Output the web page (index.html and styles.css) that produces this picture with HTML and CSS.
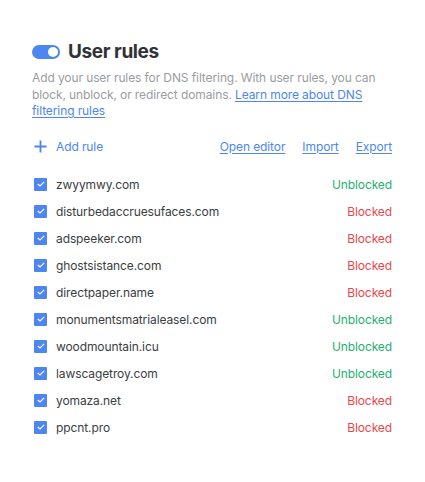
FILE: index.html
```html
<!DOCTYPE html>
<html>
<head>
<meta charset="utf-8">
<link rel="stylesheet" href="styles.css">
</head>
<body>
<div class="card">
  <div class="header">
    <span class="toggle"><span class="knob"></span></span>
    <h1 class="title">User rules</h1>
  </div>
  <p class="desc">Add your user rules for DNS filtering. With user rules, you can block, unblock, or redirect domains. <a class="link" href="#">Learn more about DNS filtering rules</a></p>
  <div class="actions">
    <a class="add" href="#"><svg class="plus" width="13" height="13" viewBox="0 0 13 13"><path d="M6.5 0.5v12M0.5 6.5h12" stroke="#4d86f0" stroke-width="1.8" fill="none"/></svg>Add rule</a>
    <div class="links">
      <a class="link" href="#">Open editor</a>
      <a class="link" href="#">Import</a>
      <a class="link" href="#">Export</a>
    </div>
  </div>
  <ul class="rules">
    <li class="rule"><span class="check"><svg width="8" height="6" viewBox="0 0 8 6"><path d="M0.8 3l2.2 2 4.2-4.2" stroke="#fff" stroke-width="1.2" fill="none"/></svg></span><span class="domain">zwyymwy.com</span><span class="status ok">Unblocked</span></li>
    <li class="rule"><span class="check"><svg width="8" height="6" viewBox="0 0 8 6"><path d="M0.8 3l2.2 2 4.2-4.2" stroke="#fff" stroke-width="1.2" fill="none"/></svg></span><span class="domain">disturbedaccruesufaces.com</span><span class="status bad">Blocked</span></li>
    <li class="rule"><span class="check"><svg width="8" height="6" viewBox="0 0 8 6"><path d="M0.8 3l2.2 2 4.2-4.2" stroke="#fff" stroke-width="1.2" fill="none"/></svg></span><span class="domain">adspeeker.com</span><span class="status bad">Blocked</span></li>
    <li class="rule"><span class="check"><svg width="8" height="6" viewBox="0 0 8 6"><path d="M0.8 3l2.2 2 4.2-4.2" stroke="#fff" stroke-width="1.2" fill="none"/></svg></span><span class="domain">ghostsistance.com</span><span class="status bad">Blocked</span></li>
    <li class="rule"><span class="check"><svg width="8" height="6" viewBox="0 0 8 6"><path d="M0.8 3l2.2 2 4.2-4.2" stroke="#fff" stroke-width="1.2" fill="none"/></svg></span><span class="domain">directpaper.name</span><span class="status bad">Blocked</span></li>
    <li class="rule"><span class="check"><svg width="8" height="6" viewBox="0 0 8 6"><path d="M0.8 3l2.2 2 4.2-4.2" stroke="#fff" stroke-width="1.2" fill="none"/></svg></span><span class="domain">monumentsmatrialeasel.com</span><span class="status ok">Unblocked</span></li>
    <li class="rule"><span class="check"><svg width="8" height="6" viewBox="0 0 8 6"><path d="M0.8 3l2.2 2 4.2-4.2" stroke="#fff" stroke-width="1.2" fill="none"/></svg></span><span class="domain">woodmountain.icu</span><span class="status ok">Unblocked</span></li>
    <li class="rule"><span class="check"><svg width="8" height="6" viewBox="0 0 8 6"><path d="M0.8 3l2.2 2 4.2-4.2" stroke="#fff" stroke-width="1.2" fill="none"/></svg></span><span class="domain">lawscagetroy.com</span><span class="status ok">Unblocked</span></li>
    <li class="rule"><span class="check"><svg width="8" height="6" viewBox="0 0 8 6"><path d="M0.8 3l2.2 2 4.2-4.2" stroke="#fff" stroke-width="1.2" fill="none"/></svg></span><span class="domain">yomaza.net</span><span class="status bad">Blocked</span></li>
    <li class="rule"><span class="check"><svg width="8" height="6" viewBox="0 0 8 6"><path d="M0.8 3l2.2 2 4.2-4.2" stroke="#fff" stroke-width="1.2" fill="none"/></svg></span><span class="domain">ppcnt.pro</span><span class="status bad">Blocked</span></li>
  </ul>
</div>
</body>
</html>
```
FILE: styles.css
```css
html, body {
  margin: 0;
  padding: 0;
  background: #fff;
}
body {
  font-family: Inter, "Noto Sans", sans-serif;
  color: #333;
  letter-spacing: -0.1px;
}
.card {
  padding: 40px 33px 0 32px;
}
.header {
  display: flex;
  align-items: center;
  gap: 8px;
}
.toggle {
  width: 28px;
  height: 14px;
  border-radius: 7px;
  background: #4d86f0;
  display: flex;
  align-items: center;
  justify-content: flex-end;
  padding: 0 2px;
  box-sizing: border-box;
}
.knob {
  width: 10px;
  height: 10px;
  border-radius: 50%;
  background: #fff;
}
.title {
  margin: 0;
  font-size: 19px;
  font-weight: 700;
  color: #2f3237;
  line-height: 24px;
  letter-spacing: -0.4px;
}
.desc {
  margin: 6px 0 0;
  font-size: 12px;
  line-height: 16.5px;
  color: #9a9da2;
}
.link {
  color: #4d86f0;
  text-decoration: underline;
  text-underline-offset: 2px;
}
.actions {
  margin-top: 19px;
  display: flex;
  justify-content: space-between;
  align-items: center;
  font-size: 12px;
  line-height: 16px;
}
.add {
  display: flex;
  align-items: center;
  gap: 9px;
  color: #4d86f0;
  text-decoration: none;
  padding-left: 2px;
}
.links {
  display: flex;
  gap: 17px;
}
.rules {
  list-style: none;
  margin: 16px 0 0;
  padding: 0;
}
.rule {
  display: flex;
  align-items: center;
  height: 27px;
  font-size: 12px;
}
.check {
  width: 13px;
  height: 13px;
  border-radius: 1px;
  background: #4d86f0;
  display: flex;
  align-items: center;
  justify-content: center;
  margin-left: 2px;
}
.domain {
  margin-left: 9px;
  flex: 1;
  color: #3a3d42;
}
.status.ok { color: #25b06f; }
.status.bad { color: #e8474d; }
```
